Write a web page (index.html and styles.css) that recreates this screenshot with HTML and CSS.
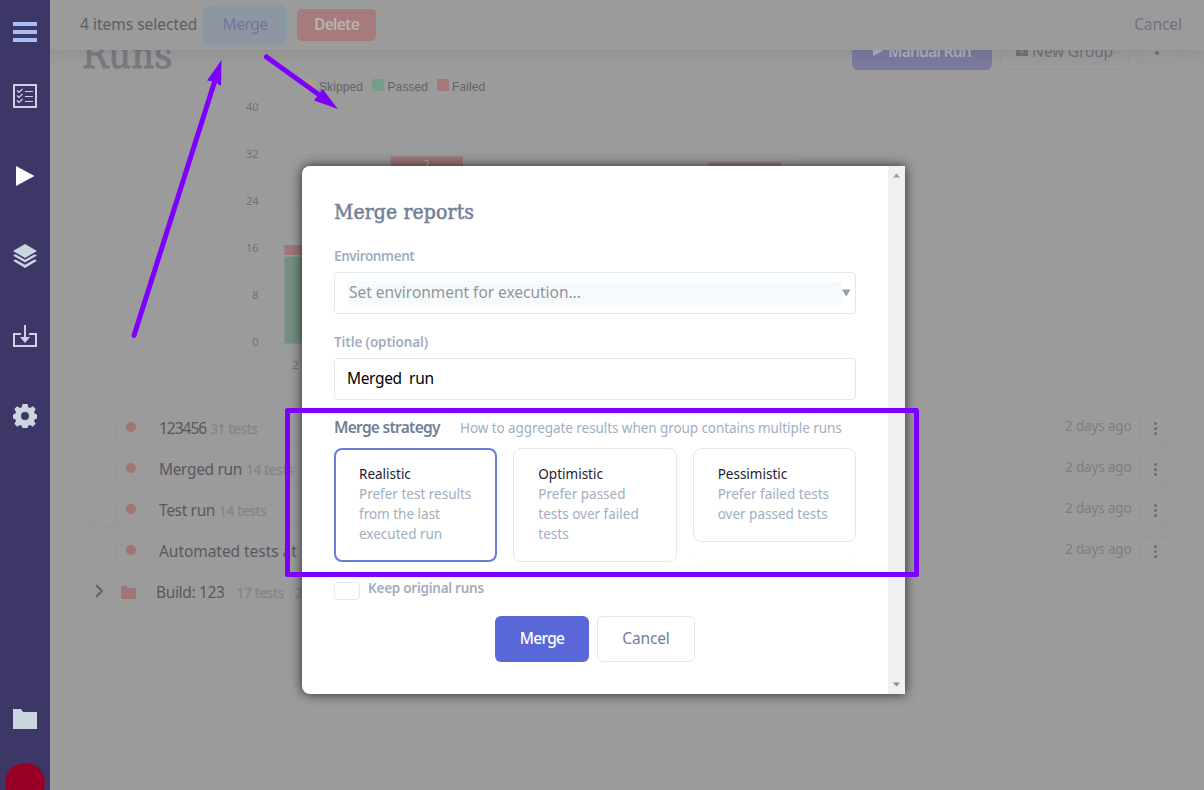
FILE: index.html
```html
<!DOCTYPE html>
<html lang="en">
<head>
<meta charset="utf-8">
<title>Runs</title>
<link rel="stylesheet" href="styles.css">
</head>
<body>
<div class="app">
  <nav class="sidebar">
    <svg class="nav-icon nav-menu" viewBox="0 0 26 26"><path fill="#a3bffa" d="M1 3h24v4H1zM1 11h24v4H1zM1 19h24v4H1z"/></svg>
    <svg class="nav-icon" viewBox="0 0 26 26" fill="none" stroke="#d5cdea"><path stroke-width="2" d="M2 2h22v22H2z"/><path stroke-width="1.2" d="M5 7.500l2 2 3.500-3.500M5 12.500l2 2 3.500-3.500M5 17.500l2 2 3.500-3.500"/><path stroke-width="1.200" d="M13 8.500h8M13 13.500h8M13 18.500h8"/></svg>
    <svg class="nav-icon" viewBox="0 0 26 26"><path fill="#fff" d="M4 3l18.500 10L4 23z"/></svg>
    <svg class="nav-icon" viewBox="0 0 26 26" fill="#cbd5e0"><path d="M13 1l12 7-12 7L1 8z"/><path d="M1 12.500l2.500-1.200L13 16.700l9.500-5.400 2.500 1.200-12 7z"/><path d="M1 17.700l2.500-1.300L13 21.800l9.500-5.400 2.500 1.300L13 25z"/></svg>
    <svg class="nav-icon" viewBox="0 0 26 26"><path fill="none" stroke="#d5cdea" stroke-width="2" d="M9 11H2v12h22V11h-7M13 2v12"/><path fill="#d5cdea" d="M8 14h10l-5 6z"/></svg>
    <svg class="nav-icon" viewBox="0 0 26 26"><path fill="#cbd5e0" fill-rule="evenodd" d="M10.500 1h5l.7 3.200 1.900.8 2.800-1.700 2.800 2.800L22 8.900l.8 1.900 2.200.7v4l-2.200.7-.8 1.900 1.700 2.700-2.900 2.900-2.700-1.700-1.900.8-.7 2.200h-5l-.7-2.200-1.900-.8-2.700 1.700-2.900-2.900L4 18.100l-.8-1.900-2.200-.7v-4l2.200-.7L4 8.900 2.300 6.100l2.800-2.800L7.900 5l1.900-.8zM13 9a4 4 0 1 0 0 8 4 4 0 0 0 0-8z"/></svg>
    <svg class="nav-icon nav-projects" viewBox="0 0 26 26"><path fill="#cbd5e0" d="M1 3h8l2 3h14v17H1z"/></svg>
    <div class="avatar"></div>
  </nav>

  <main class="main">
    <div class="selection-bar">
      <span class="selection-count">4 items selected</span>
      <span class="bar-merge">Merge</span>
      <span class="bar-delete">Delete</span>
      <span class="bar-cancel">Cancel</span>
    </div>

    <header class="page-header">
      <h1 class="page-title">Runs</h1>
      <span class="btn-run"><svg width="10" height="10"><path fill="#acacb8" d="M0 0l10 5-10 5z"/></svg>Manual Run</span>
      <span class="btn-group"><svg width="12" height="10"><path fill="#6f7278" d="M0 0h4l1 1h7v9H0z"/><path stroke="#8b8d92" d="M4 5.500h4M6 3.500v4"/></svg>New Group</span>
      <span class="btn-more"><svg width="4" height="4" fill="#6d7075"><circle cx="2" cy="2" r="2"/></svg></span>
    </header>

    <svg class="chart" viewBox="0 0 570 304" width="570" height="304">
      <g stroke="#969696"><path d="M38 33.500h530M38 80.500h530M38 127.500h530M38 174.500h530M38 221.500h530M38 268.500h530M38.500 268v6"/></g>
      <rect x="73" y="4" width="13" height="12" fill="#aca283"/><rect x="142" y="4" width="12" height="12" fill="#759d87"/><rect x="207" y="4" width="12" height="12" fill="#a4797a"/>
      <g class="legend"><text x="89" y="16">Skipped</text><text x="157.500" y="16">Passed</text><text x="222" y="16">Failed</text></g>
      <g class="ticks"><text x="28.500" y="36">40</text><text x="28.500" y="83">32</text><text x="28.500" y="130">24</text><text x="28.500" y="177">16</text><text x="28.500" y="224">8</text><text x="28.500" y="271">0</text><text x="68.500" y="294">2</text></g>
      <rect x="54.500" y="170" width="72" height="10.500" fill="#9f7778"/><rect x="54.500" y="180.500" width="72" height="1" fill="#a9aaa9"/><rect x="54.500" y="181.500" width="72" height="87" fill="#728f80"/>
      <rect x="160.500" y="81.500" width="72.500" height="190" fill="#9f7778"/><text class="bar-label" x="196.500" y="94">2</text>
      <rect x="478.500" y="87.500" width="72.500" height="180" fill="#9f7778"/>
    </svg>

    <section class="run-list">
      <div class="run"><i class="box"></i><i class="dot"></i><span class="run-name numeric">123456</span><span class="run-tests">31 <b>tests</b></span><span class="run-date">2 days ago</span><span class="run-menu"><i></i><i></i><i></i></span></div>
      <div class="run"><i class="box"></i><i class="dot"></i><span class="run-name">Merged run</span><span class="run-tests">14 <b>tests</b></span><span class="run-date">2 days ago</span><span class="run-menu"><i></i><i></i><i></i></span></div>
      <div class="run"><i class="box"></i><i class="dot"></i><span class="run-name">Test run</span><span class="run-tests">14 <b>tests</b></span><span class="run-date">2 days ago</span><span class="run-menu"><i></i><i></i><i></i></span></div>
      <div class="run"><i class="box"></i><i class="dot"></i><span class="run-name long">Automated tests at 1</span><span class="run-date">2 days ago</span><span class="run-menu"><i></i><i></i><i></i></span></div>
      <div class="group"><svg class="chevron" width="12" height="16" viewBox="0 0 12 16"><path fill="none" stroke="#606266" stroke-width="2" d="M2 2l6 6-6 6"/></svg><svg class="folder" width="15" height="13"><path fill="#a37476" d="M0 0h6l1 2h8v11H0z"/></svg><span class="run-name">Build: 123</span><span class="run-tests group-tests">17 <b>tests</b></span><span class="run-tests group-runs">2 <b>runs</b></span></div>
    </section>
  </main>
</div>

<div class="overlay">
  <div class="modal">
    <form class="modal-body">
      <h2 class="modal-title">Merge reports</h2>
      <label class="label l-env">Environment</label>
      <div class="select"><span class="select-value">Set environment for execution...</span><svg width="9" height="8"><path fill="#9c9c9c" d="M0 .5h8.500l-4.200 7z"/></svg></div>
      <label class="label l-title">Title (optional)</label>
      <div class="input">Merged&nbsp; run</div>
      <div class="strategy-head"><b class="strategy-title">Merge strategy</b><span class="strategy-hint">How to aggregate results when group contains multiple runs</span></div>
      <div class="cards">
        <div class="card selected"><p class="card-title">Realistic</p><p>Prefer test results<br>from the last<br>executed run</p></div>
        <div class="card"><p class="card-title">Optimistic</p><p>Prefer passed<br>tests over failed<br>tests</p></div>
        <div class="slot"><div class="card"><p class="card-title">Pessimistic</p><p>Prefer failed tests<br>over passed tests</p></div></div>
      </div>
      <div class="keep"><i class="keep-box"></i><label class="label l-keep">Keep original runs</label></div>
      <div class="actions"><span class="btn-primary">Merge</span><span class="btn-secondary">Cancel</span></div>
    </form>
    <div class="scrollbar"><svg width="7" height="5"><path fill="#9b9b9b" d="M3.500 .5L7 4.500H0z"/></svg><svg width="7" height="5"><path fill="#8b8b8b" d="M0 .5h7L3.500 4.500z"/></svg></div>
  </div>
</div>

<svg class="annotations" width="1204" height="790" viewBox="0 0 1204 790">
  <g fill="none" stroke="#7d00ff" stroke-width="5" stroke-linecap="round"><path d="M134 335.500L214.500 82M266.500 57L318 94"/><rect x="287.500" y="410.500" width="629" height="164" stroke-linejoin="round"/></g>
  <g fill="#7d00ff"><path d="M221.500 60L207 80.500l7 1 7 4.500zM338 109l-24-8.500 4-5.500 4.500-6z"/></g>
</svg>
</body>
</html>
```
FILE: styles.css
```css
* { box-sizing: border-box; }
body { margin: 0; font: 15.5px/20px "Noto Sans", sans-serif; overflow: hidden; }
h1, h2, p { margin: 0; }
svg { display: block; flex: none; }

.app { display: flex; height: 790px; }

.sidebar { width: 50px; flex: none; height: 790px; overflow: hidden; background: #3d3768; display: flex; flex-direction: column; align-items: center; padding-top: 19px; }
.nav-icon { width: 26px; height: 26px; flex: none; margin-bottom: 54px; }
.nav-menu { margin-bottom: 38px; }
.nav-projects { margin: 223px 0 31px; }
.avatar { width: 40px; height: 40px; flex: none; border-radius: 50%; background: #980025; }

.main { position: relative; flex: 1; background: #9b9b9b; overflow: hidden; padding-left: 32px; }

.selection-bar { position: absolute; inset: 0 0 auto 0; height: 50px; z-index: 2; background: #9b9b9b; box-shadow: 0 2px 14px rgba(0, 0, 0, .1); display: flex; align-items: center; padding: 0 6px 2px 30px; color: #5c5e62; }
.selection-count { width: 123px; white-space: nowrap; }
.bar-merge { width: 84px; height: 40px; margin-top: 2px; border: 3px solid #8898a5; border-radius: 8px; background: #8e96a4; color: #70769a; text-align: center; line-height: 33px; letter-spacing: -.5px; }
.bar-delete { width: 79px; height: 32px; margin: 2px 0 0 10px; border-radius: 5px; background: #a57b7c; color: #b8b2b2; font-weight: 600; text-align: center; line-height: 30px; letter-spacing: -.7px; }
.bar-cancel { width: 80px; height: 34px; margin-left: auto; margin-top: 2px; border: 1px solid #969799; border-radius: 6px; color: #70747d; text-align: center; line-height: 31px; letter-spacing: -.1px; }

.page-header { display: flex; height: 75px; padding-top: 30px; align-items: flex-start; color: #6f737b; }
.page-title { width: 770px; font: 39px/48px "DejaVu Serif Condensed", "DejaVu Serif", serif; color: #777a80; -webkit-text-stroke: .9px #777a80; letter-spacing: .2px; margin-top: 1px; }
.btn-run, .btn-group, .btn-more { display: flex; align-items: center; justify-content: center; height: 40px; border-radius: 6px; }
.btn-run { width: 140px; gap: 5px; background: #7a7a9d; color: #acacb8; font-weight: 600; letter-spacing: -.75px; padding-top: 1px; }
.btn-group { width: 129px; gap: 4px; margin-left: 8px; border: 1px solid #959698; letter-spacing: -.15px; padding-top: 2px; }
.btn-more { width: 42px; height: 34px; margin-left: 7px; border: 1px solid #959698; padding-top: 12px; }

.chart { margin-left: 148px; }
.legend { font: 12px "Liberation Sans", Arial, sans-serif; fill: #636363; letter-spacing: .1px; }
.ticks { font: 11px "Noto Sans", sans-serif; fill: #727272; text-anchor: end; }
.bar-label { font: 12px "Noto Sans", sans-serif; fill: #b7a8a8; text-anchor: middle; }

.run-list { margin-top: 26px; width: 1094px; color: #58595d; }
.run { display: flex; height: 41px; border-bottom: 1px solid #979797; padding: 8px 5px 0 8px; }
.box { width: 26px; height: 28px; margin-top: 5px; border: 1px solid #959698; border-radius: 5px; }
.dot { width: 10px; height: 10px; margin: 9px 23px 0 10px; border-radius: 50%; background: #a37476; }
.run-name { margin-top: 5px; white-space: nowrap; letter-spacing: -.35px; }
.numeric { letter-spacing: -1px; }
.long { letter-spacing: -.05px; }
.run-tests { margin: 6px 0 0 4px; font-size: 13.5px; color: #82868b; letter-spacing: -.25px; white-space: nowrap; -webkit-text-stroke: .3px #82868b; }
.run-tests b { font-weight: 400; }
.run-date { margin: 3px 9px 0 auto; width: 66px; font-size: 13.5px; color: #797f86; white-space: nowrap; letter-spacing: -.15px; }
.run-menu { display: flex; flex-direction: column; gap: 2px; align-items: center; width: 31px; height: 30px; border: 1px solid #949699; border-radius: 6px; padding-top: 8px; }
.run-menu i { width: 3px; height: 3px; flex: none; border-radius: 50%; background: #6a6d72; }
.group { display: flex; height: 41px; padding: 8px 0 0 12px; }
.chevron { margin: 6px 15px 0 0; }
.folder { margin: 9px 20px 0 0; }
.group-tests { margin-left: 12px; }
.group-runs { margin-left: 11px; }

.overlay { position: absolute; inset: 0; padding: 166px 0 0 302px; }
.modal { display: flex; width: 603px; height: 528px; border-radius: 8px 0 0 8px; background: #fff; box-shadow: 0 0 12px rgba(0, 0, 0, .75); }
.modal-body { width: 586px; padding: 30px 32px 0; white-space: nowrap; }
.modal-title { font: 21px/32px "DejaVu Serif Condensed", "DejaVu Serif", serif; color: #718096; -webkit-text-stroke: .5px #718096; letter-spacing: .1px; }
.label { display: block; margin: 18px 0 6px; font-size: 13.5px; font-weight: 600; color: #a0aec0; letter-spacing: -.4px; }
.l-title { letter-spacing: -.1px; }
.select, .input { display: flex; align-items: center; height: 42px; border: 1px solid #e2e8f0; border-radius: 4px; padding: 0 4px 0 12px; color: #000; }
.input { padding-bottom: 2px; letter-spacing: -.35px; }
.select-value { flex: 1; height: 24px; line-height: 23px; padding-left: 2px; border-radius: 4px; background: #f7fafc; color: #929699; letter-spacing: -.03px; }
.strategy-head { display: flex; margin: 15px 0 9px; line-height: 25px; height: 24px; }
.strategy-title { width: 126px; font-weight: 600; color: #718096; letter-spacing: -.72px; }
.strategy-hint { font-size: 13.5px; color: #a0aec0; letter-spacing: -.07px; line-height: 26px; }
.cards { display: grid; grid-template-columns: repeat(3, 1fr); gap: 16px; height: 114px; }
.card { border: 1px solid #e2e8f0; border-radius: 8px; padding: 15px 24px; font-size: 13.5px; color: #a0aec0; }
.selected { border: 2px solid #667eda; padding: 14px 23px; }
.card-title { color: #1c2030; }
.slot { border-bottom: 1px solid #f9f9fb; border-radius: 8px; }
.slot .card { height: 94px; }
.keep { display: flex; height: 18px; margin-top: 20px; gap: 8px; }
.keep-box { width: 26px; height: 18px; border: 1px solid #e2e8f0; border-radius: 4px; }
.l-keep { margin: -4px 0 0; letter-spacing: -.25px; }
.actions { display: flex; justify-content: center; gap: 8px; margin-top: 16px; text-align: center; line-height: 45px; }
.btn-primary { width: 94px; height: 46px; border-radius: 6px; background: #5a67d8; color: #fff; font-weight: 500; letter-spacing: -.7px; }
.btn-secondary { width: 98px; height: 46px; border: 1px solid #e2e8f0; border-radius: 6px; color: #718096; line-height: 43px; letter-spacing: -.15px; }
.scrollbar { width: 17px; background: #f0f0f0; display: flex; flex-direction: column; align-items: center; justify-content: space-between; padding: 7px 0; }

.annotations { position: absolute; inset: 0; }
```
